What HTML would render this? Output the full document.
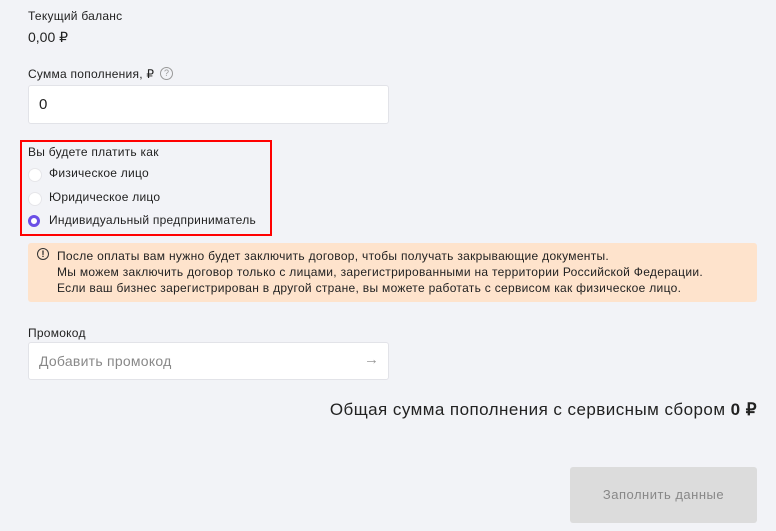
<!DOCTYPE html>
<html><head><meta charset="utf-8"><style>
body{margin:0;width:776px;height:531px;background:#f2f3f7;font-family:"Liberation Sans",sans-serif;color:#222;position:relative;overflow:hidden}
.a{position:absolute;white-space:nowrap}
.inp{position:absolute;background:#fff;border:1px solid #e2e3e8;border-radius:3px;box-sizing:border-box}
.r{position:absolute;width:12px;height:12px;border-radius:50%;background:#fff;border:1px solid #e6e6ea;left:28px}
.s{letter-spacing:0.25px}
</style></head><body>
<div class="a s" style="left:28px;top:9px;font-size:12px">Текущий баланс</div>
<div class="a" style="left:28px;top:29px;font-size:14px">0,00 ₽</div>
<div class="a s" style="left:28px;top:67px;font-size:12px">Сумма пополнения, ₽</div>
<div class="a" style="left:160px;top:67px;width:11px;height:11px;border:1px solid #999;border-radius:50%;font-size:9px;color:#999;text-align:center;line-height:11px">?</div>
<div class="inp" style="left:28px;top:85px;width:361px;height:39px"><span class="a" style="left:10px;top:10px;font-size:15px">0</span></div>
<div class="a" style="left:20px;top:140px;width:248px;height:92px;border:2px solid #f00"></div>
<div class="a s" style="left:28px;top:145px;font-size:12px">Вы будете платить как</div>
<div class="r" style="top:168px"></div>
<div class="a s" style="left:49px;top:166px;font-size:12px">Физическое лицо</div>
<div class="r" style="top:192px"></div>
<div class="a s" style="left:49px;top:190px;font-size:12px">Юридическое лицо</div>
<div class="r" style="top:215px;width:6px;height:6px;border:3px solid #6b4fe6;background:#fff"></div>
<div class="a s" style="left:49px;top:213px;font-size:12px">Индивидуальный предприниматель</div>
<div class="a" style="left:28px;top:243px;width:729px;height:59px;background:#fee3cc;border-radius:3px"></div>
<div class="a" style="left:37px;top:248px;width:10px;height:10px;border:1px solid #333;border-radius:50%;font-size:9px;text-align:center;line-height:10px;font-weight:bold">!</div>
<div class="a" style="left:57px;top:248px;font-size:12px;line-height:16px;letter-spacing:0.3px">После оплаты вам нужно будет заключить договор, чтобы получать закрывающие документы.<br>Мы можем заключить договор только с лицами, зарегистрированными на территории Российской Федерации.<br>Если ваш бизнес зарегистрирован в другой стране, вы можете работать с сервисом как физическое лицо.</div>
<div class="a s" style="left:28px;top:326px;font-size:12px">Промокод</div>
<div class="inp" style="left:28px;top:342px;width:361px;height:38px"><span class="a s" style="left:10px;top:10px;font-size:14px;color:#888">Добавить промокод</span><span class="a" style="left:335px;top:8px;font-size:15px;color:#999">→</span></div>
<div class="a" style="right:19px;top:400px;font-size:17px;letter-spacing:0.45px">Общая сумма пополнения с сервисным сбором <b>0 ₽</b></div>
<div class="a" style="left:570px;top:467px;width:187px;height:56px;background:#dcdcdc;border-radius:3px;font-size:13px;letter-spacing:0.5px;color:#888;text-align:center;line-height:56px">Заполнить данные</div>
</body></html>
